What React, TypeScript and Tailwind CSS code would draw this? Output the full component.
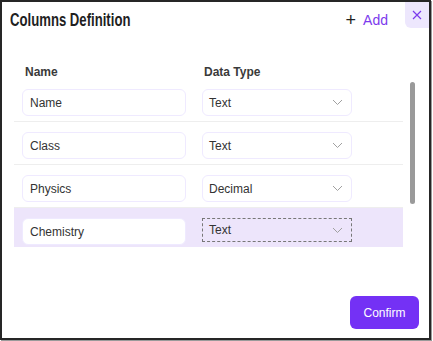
import React from "react";

const rows = [
  { name: "Name", type: "Text" },
  { name: "Class", type: "Text" },
  { name: "Physics", type: "Decimal" },
  { name: "Chemistry", type: "Text", active: true },
];

function Chevron() {
  return (
    <svg width="11" height="7" viewBox="0 0 11 7" fill="none">
      <path d="M1 1l4.5 4.5L10 1" stroke="#a0a0a0" strokeWidth="1" />
    </svg>
  );
}

export default function App() {
  return (
    <div className="w-[433px] h-[341px] bg-white" style={{ fontFamily: "'Liberation Sans', Arial, sans-serif" }}>
      <div className="relative w-[431px] h-[340px] border-2 border-[#262626] bg-white shadow-[1px_1px_0_#9a9a9a] flex flex-col">
        <div className="flex items-center h-[36px] pl-[8px]">
          <div className="text-[18px] font-bold text-[#1f1f1f] scale-x-[0.73] origin-left whitespace-nowrap">
            Columns Definition
          </div>
          <div className="ml-auto mr-[41px] flex items-center gap-[7px] text-[14px] text-[#7c3aed]">
            <span className="text-[#222] text-[18px] leading-none">+</span>
            <span>Add</span>
          </div>
        </div>
        <button className="absolute right-0 top-0 w-[24px] h-[26px] bg-[#ede7fd] rounded-bl-[6px] flex items-center justify-center">
          <svg width="10" height="10" viewBox="0 0 10 10">
            <path d="M1 1l8 8M9 1l-8 8" stroke="#7c3aed" strokeWidth="1.2" />
          </svg>
        </button>
        <div className="flex pl-[23px] pt-[25px] text-[12px] font-semibold text-[#3a3a3a]">
          <div className="w-[179px]">Name</div>
          <div>Data Type</div>
        </div>
        <div className="relative h-[168px] overflow-hidden ml-[12px] mt-[-2px]">
          {rows.map((r) => (
            <div
              key={r.name}
              className={`w-[389px] flex items-start pl-[8px] pt-[10px] pb-[5px] border-b border-[#eeeeee] ${r.active ? "bg-[#ede5fb]" : ""}`}
            >
              <div className="w-[164px] h-[27px] rounded-[6px] border border-[#efeaff] bg-white flex items-center pl-[7px] text-[12px] text-[#333]">
                {r.name}
              </div>
              <div
                className={`ml-[16px] w-[150px] flex items-center pl-[6px] pr-[8px] text-[12px] text-[#333] ${
                  r.active
                    ? "border border-dashed border-[#777] h-[24px]"
                    : "border border-[#efeaff] rounded-[6px] bg-white h-[27px]"
                }`}
              >
                <span>{r.type}</span>
                <span className="ml-auto">
                  <Chevron />
                </span>
              </div>
            </div>
          ))}
          <div className="absolute left-[396px] top-[3px] w-[5px] h-[122px] rounded-full bg-[#9a9a9a]" />
        </div>
        <div className="flex-1" />
        <div className="flex justify-end pr-[10px] pb-[9px]">
          <button className="w-[69px] h-[33px] rounded-[6px] bg-[#7431f5] text-white text-[12px]">Confirm</button>
        </div>
      </div>
    </div>
  );
}
